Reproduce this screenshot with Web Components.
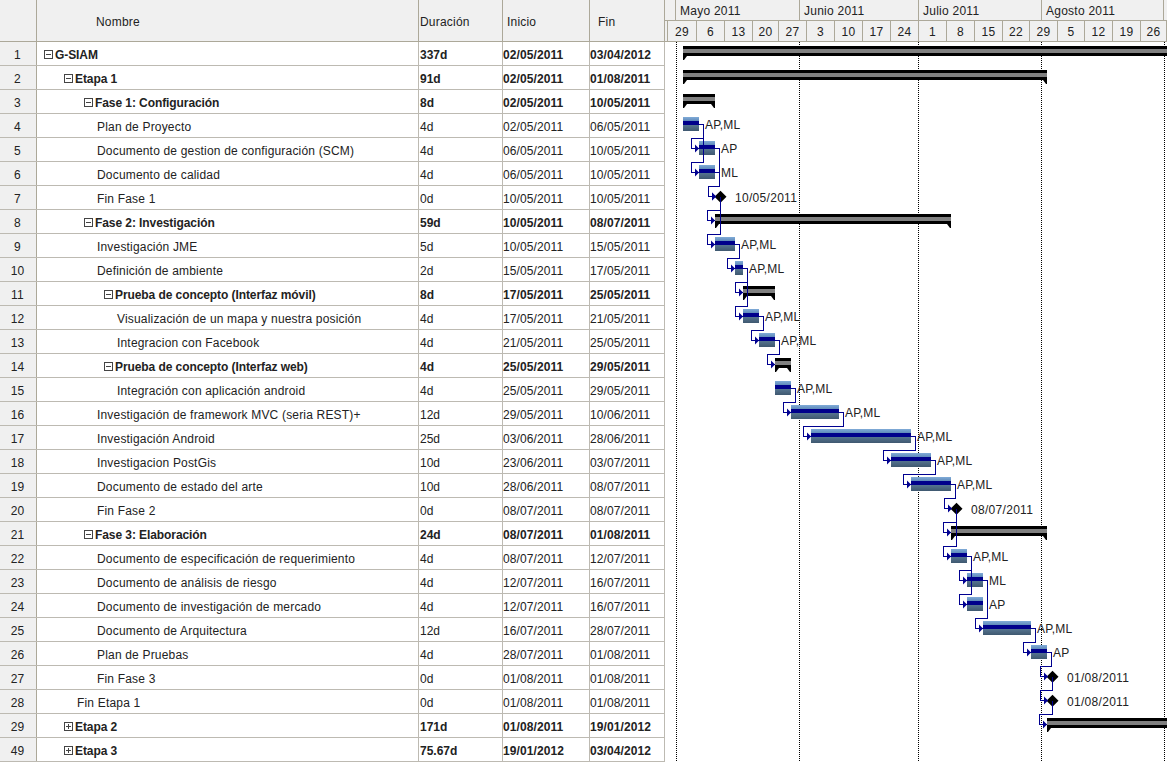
<!DOCTYPE html>
<html lang="es">
<head>
<meta charset="utf-8">
<title>G-SIAM</title>
<style>
html, body { margin: 0; height: 100%; overflow: hidden; background: #fff; }
body { font: 12px "Liberation Sans", Arial, sans-serif; color: #222; }
</style>
</head>
<body>
<gantt-app>
    <task-table slot="table"></task-table>
    <gantt-chart slot="chart"></gantt-chart>
</gantt-app>

<script>
// num, nombre, duracion, inicio, fin, nivel, tipo (s abierto, c cerrado, t tarea, m hito)
const TASKS = [
    ["1", "G-SIAM", "337d", "02/05/2011", "03/04/2012", 0, "s"],
    ["2", "Etapa 1", "91d", "02/05/2011", "01/08/2011", 1, "s"],
    ["3", "Fase 1: Configuración", "8d", "02/05/2011", "10/05/2011", 2, "s"],
    ["4", "Plan de Proyecto", "4d", "02/05/2011", "06/05/2011", 3, "t"],
    ["5", "Documento de gestion de configuración (SCM)", "4d", "06/05/2011", "10/05/2011", 3, "t"],
    ["6", "Documento de calidad", "4d", "06/05/2011", "10/05/2011", 3, "t"],
    ["7", "Fin Fase 1", "0d", "10/05/2011", "10/05/2011", 3, "m"],
    ["8", "Fase 2: Investigación", "59d", "10/05/2011", "08/07/2011", 2, "s"],
    ["9", "Investigación JME", "5d", "10/05/2011", "15/05/2011", 3, "t"],
    ["10", "Definición de ambiente", "2d", "15/05/2011", "17/05/2011", 3, "t"],
    ["11", "Prueba de concepto (Interfaz móvil)", "8d", "17/05/2011", "25/05/2011", 3, "s"],
    ["12", "Visualización de un mapa y nuestra posición", "4d", "17/05/2011", "21/05/2011", 4, "t"],
    ["13", "Integracion con Facebook", "4d", "21/05/2011", "25/05/2011", 4, "t"],
    ["14", "Prueba de concepto (Interfaz web)", "4d", "25/05/2011", "29/05/2011", 3, "s"],
    ["15", "Integración con aplicación android", "4d", "25/05/2011", "29/05/2011", 4, "t"],
    ["16", "Investigación de framework MVC (seria REST)+", "12d", "29/05/2011", "10/06/2011", 3, "t"],
    ["17", "Investigación Android", "25d", "03/06/2011", "28/06/2011", 3, "t"],
    ["18", "Investigacion PostGis", "10d", "23/06/2011", "03/07/2011", 3, "t"],
    ["19", "Documento de estado del arte", "10d", "28/06/2011", "08/07/2011", 3, "t"],
    ["20", "Fin Fase 2", "0d", "08/07/2011", "08/07/2011", 3, "m"],
    ["21", "Fase 3: Elaboración", "24d", "08/07/2011", "01/08/2011", 2, "s"],
    ["22", "Documento de especificación de requerimiento", "4d", "08/07/2011", "12/07/2011", 3, "t"],
    ["23", "Documento de análisis de riesgo", "4d", "12/07/2011", "16/07/2011", 3, "t"],
    ["24", "Documento de investigación de mercado", "4d", "12/07/2011", "16/07/2011", 3, "t"],
    ["25", "Documento de Arquitectura", "12d", "16/07/2011", "28/07/2011", 3, "t"],
    ["26", "Plan de Pruebas", "4d", "28/07/2011", "01/08/2011", 3, "t"],
    ["27", "Fin Fase 3", "0d", "01/08/2011", "01/08/2011", 3, "m"],
    ["28", "Fin Etapa 1", "0d", "01/08/2011", "01/08/2011", 2, "m"],
    ["29", "Etapa 2", "171d", "01/08/2011", "19/01/2012", 1, "c"],
    ["49", "Etapa 3", "75.67d", "19/01/2012", "03/04/2012", 1, "c"]
]

// barras del diagrama, indice = fila (0 based): inicio, fin px, etiqueta
const BARS = {
    0: { x: 683, end: 1180, open: true },
    1: { x: 683, end: 1047 },
    2: { x: 683, end: 715 },
    3: { x: 683, end: 699, label: "AP,ML" },
    4: { x: 699, end: 715, label: "AP" },
    5: { x: 699, end: 715, label: "ML" },
    6: { x: 716, ms: 720.5, label: "10/05/2011" },
    7: { x: 715, end: 951 },
    8: { x: 715, end: 735, label: "AP,ML" },
    9: { x: 735, end: 743, label: "AP,ML" },
    10: { x: 743, end: 775 },
    11: { x: 743, end: 759, label: "AP,ML" },
    12: { x: 759, end: 775, label: "AP,ML" },
    13: { x: 775, end: 791 },
    14: { x: 775, end: 791, label: "AP,ML" },
    15: { x: 791, end: 839, label: "AP,ML" },
    16: { x: 811, end: 911, label: "AP,ML" },
    17: { x: 891, end: 931, label: "AP,ML" },
    18: { x: 911, end: 951, label: "AP,ML" },
    19: { x: 952, ms: 956.5, label: "08/07/2011" },
    20: { x: 951, end: 1047 },
    21: { x: 951, end: 967, label: "AP,ML" },
    22: { x: 967, end: 983, label: "ML" },
    23: { x: 967, end: 983, label: "AP" },
    24: { x: 983, end: 1031, label: "AP,ML" },
    25: { x: 1031, end: 1047, label: "AP" },
    26: { x: 1048, ms: 1052.5, label: "01/08/2011" },
    27: { x: 1048, ms: 1052.5, label: "01/08/2011" },
    28: { x: 1047, end: 1180, open: true }
}

const LINKS = [
    [3, 4], [3, 5], [4, 6], [5, 6], [6, 7], [6, 8], [8, 9], [9, 10], [9, 11], [11, 12], [12, 13],
    [14, 15], [15, 16], [16, 17], [17, 18], [18, 19], [19, 20], [19, 21], [21, 22], [21, 23],
    [22, 24], [24, 25], [25, 26], [26, 27], [27, 28]
]

const MONTHS = [["", 11], ["Mayo 2011", 124], ["Junio 2011", 119], ["Julio 2011", 123], ["Agosto 2011", 122], ["", 3]]
const WEEKS = [["", 3], ["29", 29], ["6", 28], ["13", 28], ["20", 26], ["27", 28], ["3", 28], ["10", 28], ["17", 28], ["24", 28],
    ["1", 28], ["8", 28], ["15", 28], ["22", 27], ["29", 28], ["5", 27], ["12", 28], ["19", 28], ["26", 26]]

const ROW_H = 24
const CHART_TOP = 42


class GanttApp extends HTMLElement {
    constructor() {
        super()
        this.attachShadow({ mode: "open" })
    }

    connectedCallback() {
        this.shadowRoot.innerHTML = `
            <style>
                :host { display: flex; width: 1167px; height: 762px; overflow: hidden; }
                ::slotted([slot="table"]) { flex: 0 0 665px; }
                ::slotted([slot="chart"]) { flex: 1 1 0; min-width: 0; }
            </style>
            <slot name="table"></slot>
            <slot name="chart"></slot>
        `
    }
}


class TaskTable extends HTMLElement {
    constructor() {
        super()
        this.attachShadow({ mode: "open" })
    }

    connectedCallback() {
        this.shadowRoot.innerHTML = `
            <style>
                :host { display: block; }
                .head {
                    display: grid;
                    grid-template-columns: 37px 382px 84px 87px 75px;
                    height: 42px;
                    box-sizing: border-box;
                    border-bottom: 1px solid #aca899;
                    background: #f0f0f0;
                }
                .head div {
                    display: flex;
                    align-items: center;
                    box-sizing: border-box;
                    border-right: 1px solid #aca899;
                    letter-spacing: .2px;
                    padding-top: 2px;
                }
            </style>
            <div class="head">
                <div></div>
                <div style="padding-left: 59px">Nombre</div>
                <div style="padding-left: 1px">Duración</div>
                <div style="padding-left: 4px">Inicio</div>
                <div style="padding-left: 8px">Fin</div>
            </div>
            <slot></slot>
        `
        if (this.children.length > 0) {
            return
        }
        TASKS.forEach(task => {
            const row = document.createElement("task-row")
            row.task = task
            this.appendChild(row)
        })
    }
}


class TaskRow extends HTMLElement {
    constructor() {
        super()
        this.attachShadow({ mode: "open" })
    }

    connectedCallback() {
        const [num, name, dur, start, end, level, kind] = this.task
        const isGroup = kind === "s" || kind === "c"
        const indent = isGroup ? 7 + 20 * level : 20 * level

        this.shadowRoot.innerHTML = `
            <style>
                :host {
                    display: grid;
                    grid-template-columns: 37px 382px 84px 87px 75px;
                    height: ${ROW_H}px;
                    box-sizing: border-box;
                    border-bottom: 1px solid #bdbab2;
                    font-weight: ${isGroup ? "bold" : "normal"};
                }
                div {
                    display: flex;
                    align-items: center;
                    box-sizing: border-box;
                    border-right: 1px solid #bdbab2;
                    white-space: nowrap;
                    overflow: hidden;
                    padding-top: 3px;
                }
                .num {
                    justify-content: center;
                    background: #f0f0f0;
                    border-right-color: #aca899;
                    font-weight: normal;
                    letter-spacing: .2px;
                    padding-right: 1px;
                }
                .name { padding-left: ${indent}px; letter-spacing: ${isGroup ? "-.08px" : ".18px"}; }
                .dur { padding-left: 1px; }
                .date { letter-spacing: .1px; }
                tree-toggle { margin-right: 2px; margin-top: -1px; }
            </style>
            <div class="num">${num}</div>
            <div class="name">${isGroup ? `<tree-toggle ${kind === "c" ? "closed" : ""}></tree-toggle>` : ""}${name}</div>
            <div class="dur">${dur}</div>
            <div class="date">${start}</div>
            <div class="date">${end}</div>
        `
    }
}


class TreeToggle extends HTMLElement {
    constructor() {
        super()
        this.attachShadow({ mode: "open" })
    }

    connectedCallback() {
        const vertical = this.hasAttribute("closed") ? `<path d="M4.5 2v5"/>` : ""
        this.shadowRoot.innerHTML = `
            <style>
                :host { display: inline-block; width: 9px; height: 9px; flex: none; }
                svg { display: block; }
            </style>
            <svg width="9" height="9" viewBox="0 0 9 9" fill="none" stroke="#444" shape-rendering="crispEdges">
                <rect x=".5" y=".5" width="8" height="8"/>
                <path d="M2 4.5h5"/>${vertical}
            </svg>
        `
    }
}


class GanttChart extends HTMLElement {
    constructor() {
        super()
        this.attachShadow({ mode: "open" })
    }

    connectedCallback() {
        const cells = list => list.map(([text, w]) => `<div style="width:${w}px">${text}</div>`).join("")
        this.shadowRoot.innerHTML = `
            <style>
                :host { display: block; overflow: hidden; }
                .time { height: 42px; box-sizing: border-box; border-bottom: 1px solid #aca899; background: #f0f0f0; }
                .months, .weeks { display: flex; width: 520px; }
                .months { height: 21px; box-sizing: border-box; border-bottom: 1px solid #aca899; }
                .weeks { height: 20px; }
                .months div, .weeks div {
                    flex: none;
                    display: flex;
                    align-items: center;
                    box-sizing: border-box;
                    border-right: 1px solid #aca899;
                    letter-spacing: .25px;
                    padding-top: 2px;
                }
                .months div { padding-left: 4px; }
                .weeks div { justify-content: center; }
                svg { display: block; }
                text { font: 12px "Liberation Sans", Arial, sans-serif; fill: #222; letter-spacing: .15px; }
                .date { letter-spacing: .3px; }
            </style>
            <div class="time">
                <div class="months">${cells(MONTHS)}</div>
                <div class="weeks">${cells(WEEKS)}</div>
            </div>
            <svg width="502" height="720" viewBox="665 ${CHART_TOP} 502 720">
                <defs>
                    <linearGradient id="barTop" x1="0" y1="0" x2="0" y2="1">
                        <stop offset="0" stop-color="#80abd8"/>
                        <stop offset="1" stop-color="#5f8ab9"/>
                    </linearGradient>
                    <linearGradient id="barBottom" x1="0" y1="0" x2="0" y2="1">
                        <stop offset="0" stop-color="#55748f"/>
                        <stop offset="1" stop-color="#3f5870"/>
                    </linearGradient>
                </defs>
                ${this.gridLines()}
                ${Object.keys(BARS).map(i => this.bar(Number(i))).join("")}
                ${LINKS.map(([a, b]) => this.link(a, b)).join("")}
            </svg>
        `
    }

    rowTop(i) {
        return CHART_TOP + i * ROW_H
    }

    gridLines() {
        return [676, 799, 918, 1041, 1164].map(x =>
            `<path d="M${x + .5} ${CHART_TOP}V762" stroke="#000" stroke-dasharray="1 1" shape-rendering="crispEdges"/>`
        ).join("")
    }

    bar(i) {
        const b = BARS[i]
        const top = this.rowTop(i)

        if (b.ms) {
            const cy = top + 10.7
            return `<path d="M${b.ms} ${cy - 6}l6 6l-6 6l-6 -6z" fill="#000"/>
                <text class="date" x="${b.ms + 14.5}" y="${top + 16}">${b.label}</text>`
        }

        if (TASKS[i][6] === "t") {
            const w = b.end - b.x
            return `<rect x="${b.x}" y="${top + 3}" width="${w}" height="4" fill="url(#barTop)"/>
                <rect x="${b.x}" y="${top + 7}" width="${w}" height="4" fill="#00008b"/>
                <rect x="${b.x}" y="${top + 11}" width="${w}" height="6" fill="url(#barBottom)"/>
                <text x="${b.end + 6}" y="${top + 15}">${b.label}</text>`
        }

        const t = top + 4
        const w = b.end - b.x
        const rightTick = b.open ? "" : `<path d="M${b.end} ${t + 10}h-4l3 4h1z" fill="#000"/>`
        return `<rect x="${b.x}" y="${t}" width="${w}" height="10" fill="#000"/>
            <rect x="${b.x}" y="${t + 3}" width="${w}" height="4" fill="#808080"/>
            <path d="M${b.x} ${t + 10}h4l-3 4h-1z" fill="#000"/>${rightTick}`
    }

    link(a, b) {
        const from = BARS[a]
        const to = BARS[b]
        const y0 = this.rowTop(a) + 10.5
        const y1 = this.rowTop(b) + 10.5
        const turn = this.rowTop(b) + .5
        const left = to.x - 8 + .5
        const side = from.ms ? Math.floor(from.ms) + .5 : from.end + 4.5
        const out = from.ms ? `M${side} ${y0}` : `M${from.end} ${y0}H${side}`
        return `<path d="${out}V${turn}H${left}V${y1}H${to.x}" fill="none" stroke="#000090" shape-rendering="crispEdges"/>
            <path d="M${to.x - 4} ${y1 - 4}l4 4l-4 4z" fill="#000090"/>`
    }
}

customElements.define("tree-toggle", TreeToggle)
customElements.define("task-row", TaskRow)
customElements.define("task-table", TaskTable)
customElements.define("gantt-chart", GanttChart)
customElements.define("gantt-app", GanttApp)
</script>
</body>
</html>
